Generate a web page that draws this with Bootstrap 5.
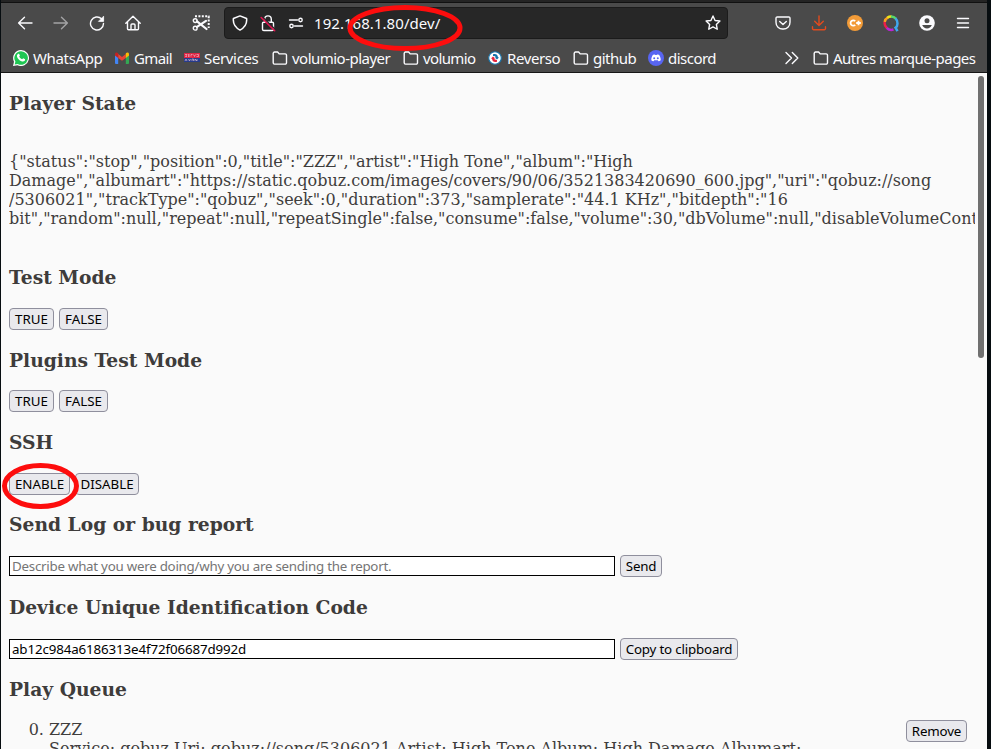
<!DOCTYPE html>
<html lang="fr">
<head>
<meta charset="utf-8">
<meta name="viewport" content="width=device-width, initial-scale=1">
<title>Volumio dev</title>
<link href="https://cdn.jsdelivr.net/npm/bootstrap@5.3.0/dist/css/bootstrap.min.css" rel="stylesheet">
<style>
html,body{height:100%;overflow:hidden}
body{background:#070d10;font-family:"Noto Sans","Open Sans",sans-serif;padding:0 4px 0 1px}
svg{display:block;flex:none}
.window{height:749px;width:986px;background:#fafafa}
.chrome{height:73px;background:#4a4a4a;border-bottom:1px solid #161616;color:#fbfbfe}
.tabs-edge{height:3px;background:#242424;border-bottom:1px solid #111}
.toolbar{height:40px;padding-left:6px}
.tool{width:36px;height:36px;display:flex;align-items:center;justify-content:center}
.last-tool{margin-right:6px}
.ico{fill:none;stroke:#fbfbfe;stroke-width:1.4;stroke-linecap:round;stroke-linejoin:round}
.urlbar{width:504px;height:32px;background:#272727;border:1px solid #1b1b1b;border-radius:4px;margin-left:5px;margin-right:37px;padding-left:1px}
.urlbar .tool{width:28px;height:28px}
.url{font-size:15px;margin-left:4px;letter-spacing:.05px;white-space:pre}
.bookmarks{height:29px;padding-left:12px;font-size:15px;line-height:20px}
.bm{display:flex;align-items:center;gap:4px;white-space:nowrap;height:29px}
.bm-wa{width:101px}.bm-gm{width:70px}.bm-sv{width:88px}.bm-vp{width:131px}.bm-vo{width:84px}
.bm-rv{width:86px}.bm-gh{width:75px}.bm-dc{width:137px}.bm-more{width:28px}
.bm-wa span{letter-spacing:-.35px}.bm-gm span{letter-spacing:-.6px}.bm-sv span{letter-spacing:-.35px}
.bm-vp span{letter-spacing:-.52px}.bm-vo span{letter-spacing:-.62px}.bm-rv span{letter-spacing:-.4px}
.bm-gh span,.bm-dc span,.bm-other span{letter-spacing:-.52px}
.page{height:676px;overflow:hidden;padding:19px 12px 0 8px;font:16px/19px "DejaVu Serif",serif;color:#3f3d3c}
.page h3{font:bold 18.72px/22px "DejaVu Serif",serif;margin:0;color:#3e3c3b}
.state{margin:38px 0;white-space:pre;overflow:hidden;height:76px}
.controls{height:22px;margin:20px 0 19px;display:flex;gap:5px;align-items:center}
.c2{margin-top:19px}.c3{margin-bottom:18px;margin-top:20px}
.queue{margin-top:20px;padding:0 8px}
.key{height:22px;border:1px solid #8f8f9d;border-radius:4px;background:#e9e9ed;color:#000;font:13.333px/18px "Noto Sans","Open Sans",sans-serif;padding:0;text-align:center;white-space:nowrap}
.k-true{width:45px}.k-false{width:49px}.k-enable{width:61px}.k-disable{width:64px}.k-send{width:42px;letter-spacing:-.2px}.k-copy{width:118px;letter-spacing:-.18px}.k-remove{width:61px;letter-spacing:-.15px}
.entry{width:606px;height:20px;border:1px solid #000;border-radius:0;background:#fff;padding:0 2px;color:#000;font:13.333px/18px "Noto Sans","Open Sans",sans-serif;letter-spacing:-.12px}
.entry::placeholder{color:#757575;opacity:1;letter-spacing:-.25px}
.scroll-thumb{position:absolute;left:978px;top:76px;width:6px;height:282px;border-radius:3px;background:#707070}
.marker{position:absolute;fill:none;stroke:#fd0d0d;stroke-width:5}
.m-url{left:346px;top:4px}.m-ssh{left:0;top:462px}
</style>
<script src="https://cdn.jsdelivr.net/npm/bootstrap@5.3.0/dist/js/bootstrap.bundle.min.js"></script>
</head>
<body>
<svg width="0" height="0" class="position-absolute"><defs>
<symbol id="folder" viewBox="0 0 16 16"><path d="M1.200 12.800V3.300a1.300 1.300 0 0 1 1.300-1.300h3.100l1.600 1.900h6a1.300 1.300 0 0 1 1.300 1.300v7.600a1.300 1.300 0 0 1-1.300 1.300H2.500a1.300 1.300 0 0 1-1.300-1.300z"/></symbol>
</defs></svg>
<div class="window">
<header class="chrome">
<div class="tabs-edge"></div>
<nav class="toolbar d-flex align-items-center">
<div class="tool"><svg class="ico" width="16" height="16" viewBox="0 0 16 16"><path d="M15 8H1.600M7.500 2.300 1.600 8l5.900 5.700"/></svg></div>
<div class="tool"><svg class="ico opacity-50" width="16" height="16" viewBox="0 0 16 16"><path d="M1 8h13.400M8.500 2.300 14.400 8l-5.900 5.700"/></svg></div>
<div class="tool"><svg class="ico" width="16" height="16" viewBox="0 0 16 16"><path d="M14.500 8.500A6.500 6.500 0 1 1 12.500 3.800"/><path d="M14.600 1.600v4.800H9.800z" fill="#fbfbfe" stroke-width=".8"/></svg></div>
<div class="tool"><svg class="ico" width="16" height="16" viewBox="0 0 16 16"><path d="M.8 8.300 8 1.200l7.200 7.100M2.500 7v6.800a1 1 0 0 0 1 1h9a1 1 0 0 0 1-1V7M6 14.600V10a1 1 0 0 1 1-1h2a1 1 0 0 1 1 1v4.600"/></svg></div>
<div class="tool ms-auto"><svg class="ico" width="18" height="17" viewBox="0 0 18 17"><path d="M3 1.300h13.700V13" stroke-width="2" stroke-dasharray="2 1.400" stroke-linecap="butt"/><path d="m5 6.300 9.500 7.700M5 11.800l9-6" stroke-width="2.200"/><circle cx="3.200" cy="5.600" r="1.900"/><circle cx="3.200" cy="13.200" r="1.900"/></svg></div>
<div class="urlbar d-flex align-items-center">
<div class="tool"><svg class="ico" width="16" height="16" viewBox="0 0 16 16"><path d="M8 .9 14 3.500c.5 4.900-1.300 8.900-6 11.600C3.300 12.400 1.500 8.400 2 3.500z" transform="translate(-.8 0) scale(1.100 1)"/></svg></div>
<div class="tool"><svg class="ico" width="16" height="17" viewBox="0 0 16 17"><path d="M4.700 7V4.200a3.300 3.300 0 0 1 6.600 0V7M3.500 7.200h9a1 1 0 0 1 1 1v6a1.300 1.300 0 0 1-1.300 1.300H3.800a1.300 1.300 0 0 1-1.300-1.300v-6a1 1 0 0 1 1-1z"/><path d="m2.500 2 12.500 12.300" stroke="#272727" stroke-width="1.500"/><path d="m1.200 2.500 13.500 13.200" stroke="#e31653" stroke-width="1.600"/></svg></div>
<div class="tool"><svg class="ico" width="16" height="12" viewBox="0 0 16 12"><path d="M1.500 3h8M6.500 9h8"/><circle cx="12.500" cy="3" r="1.700"/><circle cx="3.500" cy="9" r="1.700"/></svg></div>
<span class="url">192.168.1.80/dev/</span>
<div class="tool ms-auto"><svg class="ico" width="16" height="16" viewBox="0 0 16 16"><path d="m8 1 2.050 4.450 4.850.6-3.550 3.350.9 4.850L8 11.900l-4.250 2.350.9-4.850L1.100 6.050l4.850-.6z"/></svg></div>
</div>
<div class="tool"><svg class="ico" width="16" height="14" viewBox="0 0 16 14"><path d="M2.300 1h11.400A1.200 1.200 0 0 1 15 2.200v4A6.600 6.600 0 0 1 8 13a6.600 6.600 0 0 1-7-6.800v-4A1.200 1.200 0 0 1 2.300 1z"/><path d="M4.700 5.400 8 8.600l3.300-3.200"/></svg></div>
<div class="tool"><svg class="ico" width="16" height="16" viewBox="0 0 16 16"><g stroke="#e24a1d"><path d="M8 1v9.400M3.700 6.300 8 10.500l4.300-4.200M1.500 11.800v1.700a1.200 1.200 0 0 0 1.200 1.200h10.600a1.200 1.200 0 0 0 1.200-1.200v-1.700"/></g></svg></div>
<div class="tool"><svg width="16" height="16" viewBox="0 0 16 16"><circle cx="8" cy="8" r="8" fill="#f29b38"/><g fill="none" stroke="#fff" stroke-width="1.800"><path d="M8.200 6.100a2.700 2.700 0 1 0 0 3.800M9.200 8h4.600M11.500 5.700v4.600"/></g></svg></div>
<div class="tool"><svg width="17" height="17" viewBox="0 0 17 17" fill="none" stroke-width="2.500"><path d="M1.700 7A6.400 6.400 0 0 1 5 2.400" stroke="#fb9f21"/><path d="M4.300 2.700A6.400 6.400 0 0 1 8.500 1.500" stroke="#e9e51b"/><path d="M8 1.500a6.400 6.400 0 0 1 5 2.300" stroke="#58d76b"/><path d="M12.500 3.300a6.500 6.500 0 0 1 2 5.200c0 2-.8 3.400-2 4.200l2 3.500" stroke="#3fa7ed"/><path d="M1.700 7a6.500 6.500 0 0 0 2.200 6" stroke="#ed1f49"/><path d="M3.700 12.800a6.500 6.500 0 0 0 6.800 1.700" stroke="#ba26d4"/></svg></div>
<div class="tool"><svg width="16" height="16" viewBox="0 0 16 16"><circle cx="8" cy="8" r="7.800" fill="#fbfbfe"/><circle cx="8" cy="5.800" r="2.500" fill="#4a4a4a"/><path d="M3.200 10h9.600c-1 2.300-2.500 3.500-4.800 3.500S4.200 12.300 3.200 10z" fill="#4a4a4a"/></svg></div>
<div class="tool last-tool"><svg class="ico" width="14" height="12" viewBox="0 0 14 12"><path d="M1.500 1.500h11M1.500 6h11M1.500 10.500h11"/></svg></div>
</nav>
<div class="bookmarks d-flex">
<div class="bm bm-wa"><svg width="16" height="16" viewBox="0 0 16 16"><path d="M8 0a8 8 0 1 1-3.500 15.200L0 16l1-4.300A8 8 0 0 1 8 0z" fill="#fff"/><path d="M8 1.200a6.800 6.800 0 1 1-3.300 12.700l-3 .6.700-2.900A6.800 6.800 0 0 1 8 1.200z" fill="#1fc653"/><path d="M5 4c.8-.6 1.300-.2 1.900 1.500L6.200 6.700c.7 1.200 1.600 2 2.900 2.600l1.100-1 1.900 1c.1 2-1.800 2.700-3.700 1.900-2.100-.8-4-2.900-4.400-4.700C3.800 5.500 4.200 4.500 5 4z" fill="#fff"/></svg><span>WhatsApp</span></div>
<div class="bm bm-gm"><svg width="16" height="16" viewBox="0 0 16 16"><path d="M1 4.200 4.200 6.500V14H2a1 1 0 0 1-1-1z" fill="#4285f4"/><path d="m15 4.200-3.200 2.300V14H14a1 1 0 0 0 1-1z" fill="#34a853"/><path d="M4.200 4 8 6.900 11.800 4v4L8 10.800 4.200 8z" fill="#ea4335"/><path d="M1 4.200c0-1.700 1.700-2.100 3.200-1V8L1 5.600z" fill="#c5221f"/><path d="M15 4.200c0-1.700-1.700-2.100-3.200-1V8L15 5.600z" fill="#fbbc04"/></svg><span>Gmail</span></div>
<div class="bm bm-sv"><svg width="16" height="10" viewBox="0 0 16 10"><path fill="#df2543" d="M0 0h16v5H0z"/><path fill="#263b8c" d="M0 5h16v4H0z"/><path d="M1 1.500h2L1.500 3.500H3M4 1.500h1.500M4 2.500h1.500M4 3.500h1.500M7 3.500v-2h1.500M9.500 1.500l1 2 1-2M12.500 1.500h2v2h-2M1 8l1-2 1 2M4.500 6l1 2 1-2M8 8V6h1.500v2M11 8V6l2 2V6" fill="none" stroke="#f4cbd6" stroke-width=".6"/></svg><span>Services</span></div>
<div class="bm bm-vp"><svg class="ico" width="16" height="16"><use href="#folder"/></svg><span>volumio-player</span></div>
<div class="bm bm-vo"><svg class="ico" width="16" height="16"><use href="#folder"/></svg><span>volumio</span></div>
<div class="bm bm-rv"><svg width="16" height="16" viewBox="0 0 16 16"><circle cx="8" cy="8" r="6.300" fill="#fff" stroke="#1673aa" stroke-width="1.100"/><path d="M6 4.200c3-.8 4.500.3 5 3l1 .2-2 2-2.300-2h1.200C8.500 6.300 7.500 6 6 6z" fill="#1673aa"/><path d="M10 11.800c-3 .8-4.500-.3-5-3l-1-.2 2-2 2.300 2H7.100c.4 1.100 1.400 1.400 2.900 1.400z" fill="#e5233b"/></svg><span>Reverso</span></div>
<div class="bm bm-gh"><svg class="ico" width="16" height="16"><use href="#folder"/></svg><span>github</span></div>
<div class="bm bm-dc"><svg width="16" height="16" viewBox="0 0 16 16"><circle cx="8" cy="8" r="8" fill="#5865f2"/><path d="M5 4.700 6.900 4.400l.4.700h1.400l.4-.7 1.900.3c1.200 1.700 1.800 3.600 1.700 5.600-.7.600-1.400.9-2.200 1l-.7-1H6.200l-.7 1c-.8-.1-1.500-.4-2.200-1C3.200 8.300 3.800 6.400 5 4.700z" fill="#fff"/><circle cx="6.200" cy="8.200" r="1" fill="#5865f2"/><circle cx="9.800" cy="8.200" r="1" fill="#5865f2"/></svg><span>discord</span></div>
<div class="bm bm-more"><svg class="ico" width="14" height="14" viewBox="0 0 14 14"><path d="m1 1.500 5.500 5.500L1 12.500M7.300 1.500l5.500 5.500-5.500 5.500"/></svg></div>
<div class="bm bm-other"><svg class="ico" width="16" height="16"><use href="#folder"/></svg><span>Autres marque-pages</span></div>
</div>
</header>
<main class="page">
<h3>Player State</h3>
<div class="state">{"status":"stop","position":0,"title":"ZZZ","artist":"High Tone","album":"High
Damage","albumart":"https://static.qobuz.com/images/covers/90/06/3521383420690_600.jpg","uri":"qobuz://song
/5306021","trackType":"qobuz","seek":0,"duration":373,"samplerate":"44.1 KHz","bitdepth":"16
bit","random":null,"repeat":null,"repeatSingle":false,"consume":false,"volume":30,"dbVolume":null,"disableVolumeCont</div>
<h3>Test Mode</h3>
<div class="controls"><button class="key k-true">TRUE</button><button class="key k-false">FALSE</button></div>
<h3>Plugins Test Mode</h3>
<div class="controls c2"><button class="key k-true">TRUE</button><button class="key k-false">FALSE</button></div>
<h3>SSH</h3>
<div class="controls c3"><button class="key k-enable">ENABLE</button><button class="key k-disable">DISABLE</button></div>
<h3>Send Log or bug report</h3>
<div class="controls"><input class="entry" placeholder="Describe what you were doing/why you are sending the report."><button class="key k-send">Send</button></div>
<h3>Device Unique Identification Code</h3>
<div class="controls c3"><input class="entry" value="ab12c984a6186313e4f72f06687d992d"><button class="key k-copy">Copy to clipboard</button></div>
<h3>Play Queue</h3>
<div class="queue d-flex justify-content-between align-items-start">
<ol start="0" class="mb-0"><li>ZZZ<br>Service: qobuz Uri: qobuz://song/5306021 Artist: High Tone Album: High Damage Albumart:</li></ol>
<button class="key k-remove">Remove</button>
</div>
</main>
</div>
<div class="scroll-thumb"></div>
<svg class="marker m-url" width="120" height="50" viewBox="0 0 120 50"><ellipse cx="59" cy="24" rx="55" ry="20.500"/></svg>
<svg class="marker m-ssh" width="82" height="50" viewBox="0 0 82 50"><ellipse cx="40.500" cy="24" rx="36" ry="20.500"/></svg>
</body>
</html>
